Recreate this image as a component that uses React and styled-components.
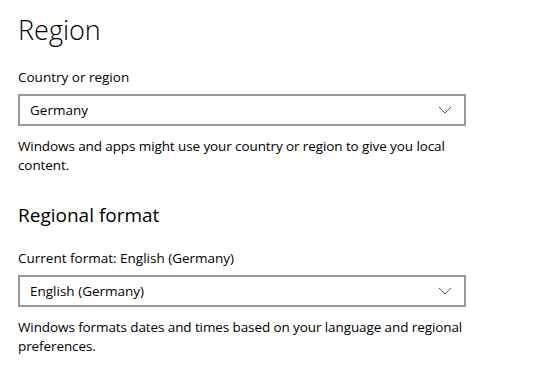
import React from "react";
import styled, { createGlobalStyle } from "styled-components";

const GlobalStyle = createGlobalStyle`
  body {
    margin: 0;
    background: #ffffff;
    font-family: "Open Sans", "Noto Sans", sans-serif;
    color: #000000;
  }
`;

const Page = styled.div`
  padding: 10px 18px 0 18px;
  width: 464px;
`;

const Title = styled.h1`
  margin: 0;
  font-size: 27px;
  font-weight: 300;
  line-height: 40px;
`;

const Heading = styled.h2`
  margin: 0;
  font-size: 19px;
  font-weight: 400;
  line-height: 28px;
`;

const Label = styled.div`
  font-size: 13.5px;
  line-height: 20px;
  margin-bottom: 7px;
`;

const Select = styled.div`
  display: flex;
  align-items: center;
  justify-content: space-between;
  width: 422px;
  height: 28px;
  border: 2px solid #999999;
  padding: 0 12px 0 10px;
  font-size: 13.5px;
`;

const Description = styled.p`
  margin: 0;
  font-size: 13.5px;
  line-height: 19px;
  padding-top: 11px;
  letter-spacing: -0.1px;
`;

const Section = styled.section`
  margin-top: ${(p) => p.gap}px;
`;

const Chevron = () => (
  <svg width="14" height="8" viewBox="0 0 14 8">
    <path d="M1 1 L7 7 L13 1" fill="none" stroke="#555" strokeWidth="1" />
  </svg>
);

const Dropdown = ({ value }) => (
  <Select>
    <span>{value}</span>
    <Chevron />
  </Select>
);

const App = () => (
  <>
    <GlobalStyle />
    <Page>
      <Title>Region</Title>
      <Section gap={17}>
        <Label>Country or region</Label>
        <Dropdown value="Germany" />
        <Description>
          Windows and apps might use your country or region to give you local
          content.
        </Description>
      </Section>
      <Section gap={26}>
        <Heading>Regional format</Heading>
        <Section gap={19}>
          <Label>Current format: English (Germany)</Label>
          <Dropdown value="English (Germany)" />
          <Description>
            Windows formats dates and times based on your language and regional
            preferences.
          </Description>
        </Section>
      </Section>
    </Page>
  </>
);

export default App;
